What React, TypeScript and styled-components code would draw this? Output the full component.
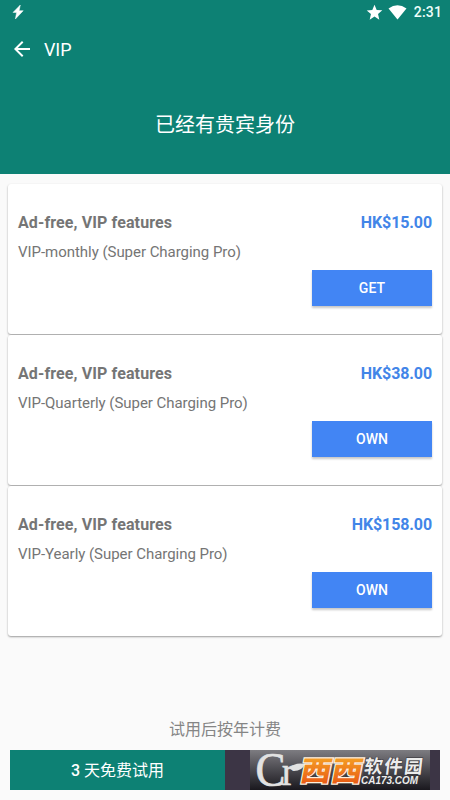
import React from "react";
import styled, { createGlobalStyle } from "styled-components";

const Global = createGlobalStyle`
  * { box-sizing: border-box; }
  body { margin: 0; background: #fafafa; font-family: Roboto, "Noto Sans CJK SC", sans-serif; }
`;
const Screen = styled.main`
  width: 450px; height: 800px; overflow: hidden;
  display: flex; flex-direction: column; background: #fafafa;
`;
const Header = styled.header`
  height: 174px; flex: none; background: #0d8174; color: #fff;
  display: flex; flex-direction: column;
`;
const StatusBar = styled.div`
  height: 24px; padding: 0 8px 0 10px; display: flex; align-items: center;
  svg { display: block; }
`;
const StatusIcons = styled.div`
  margin-left: auto; display: flex; align-items: center; gap: 5px;
`;
const Clock = styled.span`
  font-size: 14px; font-weight: 500; line-height: 24px; margin-left: 2px; color: #eefffb;
  letter-spacing: 0.15px;
`;
const Toolbar = styled.div`
  height: 50px; padding-left: 10px; display: flex; align-items: center; gap: 10px;
  svg { display: block; }
`;
const Title = styled.h1`
  margin: 2px 0 0; font-size: 18px; font-weight: 400; line-height: 24px; letter-spacing: -0.1px;
`;
const Membership = styled.div`
  height: 100px; padding-top: 2px; display: flex; align-items: center; justify-content: center;
  font-size: 20px; line-height: 30px;
`;
const Plans = styled.section`
  padding: 10px 8px 0; display: flex; flex-direction: column; gap: 1px;
`;
const Card = styled.article`
  height: 150px; padding: 28px 10px 0; background: #fff; border-radius: 3px;
  box-shadow: 0 1px 2px rgba(0, 0, 0, 0.38);
  display: flex; flex-direction: column;
`;
const Row = styled.div`
  display: flex; justify-content: space-between; font-size: 16px; line-height: 22px; font-weight: 700;
`;
const Feature = styled.span`color: #757575; letter-spacing: 0.11px;`;
const Price = styled.span`color: #4285e8; letter-spacing: -0.1px;`;
const Detail = styled.div`
  margin-top: 8px; font-size: 15px; line-height: 20px; letter-spacing: -0.04px; color: #757575;
`;
const Action = styled.button`
  margin: 8px 0 0; align-self: flex-end; width: 120px; height: 36px; border: 0; padding: 0;
  background: #4285f4; color: #fff; font: 500 14px/36px Roboto, sans-serif; letter-spacing: 0.1px;
  box-shadow: 0 2px 2px rgba(0, 0, 0, 0.22);
`;
const Footer = styled.footer`
  margin-top: auto; padding: 0 10px 10px; display: flex; flex-direction: column;
`;
const Note = styled.div`
  height: 24px; margin-bottom: 8px; text-align: center; font-size: 16px; line-height: 24px; color: #858585;
`;
const Options = styled.div`
  position: relative; height: 40px; display: grid; grid-template-columns: 1fr 1fr;
`;
const Option = styled.button<{ $bg: string }>`
  border: 0; padding: 2px 0 0; background: ${(p) => p.$bg}; color: #fff;
  font: 500 16px/38px Roboto, "Noto Sans CJK SC", sans-serif;
`;
const CJK = styled.span`font-weight: 400;`;
const Watermark = styled.svg`
  position: absolute; right: 10px; top: 0; display: block;
`;

const plans = [
  { period: "monthly", price: "HK$15.00", action: "GET" },
  { period: "Quarterly", price: "HK$38.00", action: "OWN" },
  { period: "Yearly", price: "HK$158.00", action: "OWN" },
];

function SiteMark() {
  return (
    <Watermark width="180" height="40" viewBox="0 0 180 40">
      <defs>
        <linearGradient id="band" x2="0" y2="1">
          <stop offset="0" stopColor="#828185" />
          <stop offset="0.5" stopColor="#4b4a4f" />
          <stop offset="1" stopColor="#17161b" />
        </linearGradient>
        <linearGradient id="orange" x2="0" y2="1">
          <stop offset="0" stopColor="#f8b52a" />
          <stop offset="1" stopColor="#e64c10" />
        </linearGradient>
      </defs>
      <rect width="180" height="40" fill="url(#band)" opacity="0.93" />
      <g fill="#e2e2e2" stroke="#e2e2e2" strokeWidth="0.7" fontFamily="Liberation Serif, serif">
        <text x="5.5" y="35.5" fontSize="49" textLength="30" lengthAdjust="spacingAndGlyphs">C</text>
        <text x="32" y="34.5" fontSize="40" textLength="12" lengthAdjust="spacingAndGlyphs">r</text>
      </g>
      <path d="M40 19q4-7 15-5q-3 7-11 7z" fill="#e2e2e2" />
      <g fontFamily="Noto Sans CJK SC, sans-serif" fontWeight="900" fontSize="28" fill="url(#orange)" stroke="#fff0dd" strokeWidth="2.4" paintOrder="stroke">
        <text transform="translate(49 31) skewX(-11) scale(1.1 1)">西</text>
        <text transform="translate(80 31) skewX(-11) scale(1.1 1)">西</text>
      </g>
      <g fill="#ececec" stroke="#333237" strokeWidth="1" paintOrder="stroke">
        <g fontFamily="Noto Sans CJK SC, sans-serif" fontWeight="700" fontSize="18.5">
          <text transform="translate(113.5 22.5) skewX(-7)">软</text>
          <text transform="translate(133.5 22.5) skewX(-7)">件</text>
          <text transform="translate(153.5 22.5) skewX(-7)">园</text>
        </g>
        <text x="111" y="34" fontFamily="Liberation Sans, sans-serif" fontSize="10" fontWeight="700" fontStyle="italic" textLength="57" lengthAdjust="spacingAndGlyphs">CA173.COM</text>
      </g>
    </Watermark>
  );
}

export default function App() {
  return (
    <>
      <Global />
      <Screen>
        <Header>
          <StatusBar>
            <svg width="16" height="16" viewBox="0 0 16 16"><path d="M10.3 1L3 8.4h3.6L5.4 15l7.8-8.3H9.1z" fill="#fff" stroke="#fff" strokeWidth="0.5" /></svg>
            <StatusIcons>
              <svg width="17" height="17" viewBox="0 0 24 24"><path d="M12 17.8l6.8 4.3-1.8-7.9 6-5.2-7.9-.7L12 1 8.9 8.3 1 9l6 5.2-1.8 7.9z" fill="#fff" /></svg>
              <svg width="19" height="15" viewBox="0 0 19 15"><path d="M.5 3.5Q9.5-3 18.5 3.5L9.5 14.5z" fill="#fff" /></svg>
              <Clock>2:31</Clock>
            </StatusIcons>
          </StatusBar>
          <Toolbar>
            <svg width="24" height="24" viewBox="0 0 24 24"><path d="M20 11H7.8l5.6-5.6L12 4l-8 8 8 8 1.4-1.4L7.8 13H20z" fill="#fff" /></svg>
            <Title>VIP</Title>
          </Toolbar>
          <Membership>已经有贵宾身份</Membership>
        </Header>
        <Plans>
          {plans.map((p) => (
            <Card key={p.period}>
              <Row><Feature>Ad-free, VIP features</Feature><Price>{p.price}</Price></Row>
              <Detail>VIP-{p.period} (Super Charging Pro)</Detail>
              <Action>{p.action}</Action>
            </Card>
          ))}
        </Plans>
        <Footer>
          <Note>试用后按年计费</Note>
          <Options>
            <Option $bg="#0d8174">3 <CJK>天免费试用</CJK></Option>
            <Option $bg="#3c3545"><CJK>高级订阅</CJK></Option>
            <SiteMark />
          </Options>
        </Footer>
      </Screen>
    </>
  );
}
